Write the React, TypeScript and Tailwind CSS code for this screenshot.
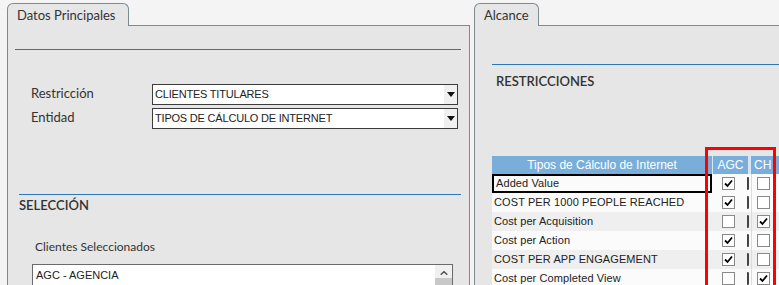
import React from "react";

const rows = [
  { name: "Added Value", agc: true, ch: false, bg: "bg-[#fbfbfb]", sel: true },
  { name: "COST PER 1000 PEOPLE REACHED", agc: true, ch: false, bg: "bg-[#fbfbfb]" },
  { name: "Cost per Acquisition", agc: false, ch: true, bg: "bg-[#efefef]" },
  { name: "Cost per Action", agc: true, ch: false, bg: "bg-[#fbfbfb]" },
  { name: "COST PER APP ENGAGEMENT", agc: true, ch: false, bg: "bg-[#efefef]" },
  { name: "Cost per Completed View", agc: false, ch: true, bg: "bg-[#fbfbfb]" },
];

function Check({ on }: { on: boolean }) {
  return (
    <div className="w-[13px] h-[13px] border border-[#8a8a8a] bg-white flex items-center justify-center">
      {on && (
        <svg width="9" height="9" viewBox="0 0 9 9">
          <path d="M1 4.5 L3.5 7 L8 1.5" stroke="#000" strokeWidth="1.8" fill="none" />
        </svg>
      )}
    </div>
  );
}

function Select({ value }: { value: string }) {
  return (
    <div className="w-[306px] h-[21px] border border-[#3c3c3c] bg-white flex items-stretch">
      <div className="flex-1 pl-[2px] flex items-center text-[11px] text-[#222] font-['Liberation_Sans',sans-serif] tracking-[-0.2px]">
        {value}
      </div>
      <div className="w-[13px] bg-[#f0f0f0] flex items-center justify-center">
        <svg width="8" height="5" viewBox="0 0 8 5">
          <path d="M0 0 H8 L4 5 Z" fill="#111" />
        </svg>
      </div>
    </div>
  );
}

export default function App() {
  const sans = "font-['Lato','Noto_Sans',sans-serif]";
  return (
    <div className={`w-[779px] h-[285px] overflow-hidden bg-[#f4f4f4] flex pt-[3px] ${sans}`}>
      {/* Left panel */}
      <div className="ml-[7px] w-[463px] flex flex-col shrink-0">
        <div className="flex h-[24px]">
          <div className="w-[122px] border border-b-0 border-[#7d8b90] rounded-t-[6px] bg-[#e6e6e6] pl-[9px] pt-[2px] text-[13px] text-[#333]">
            Datos Principales
          </div>
          <div className="flex-1 border-b border-[#7d8b90]" />
        </div>
        <div className="flex-1 border-l border-r border-[#7d8b90] bg-[#e6e6e6] flex flex-col">
          <div className="mt-[23px] ml-[7px] mr-[8px] h-[1px] bg-[#2b78b8]" />
          <div className="mt-[34px] flex flex-col gap-[3px]">
            <div className="flex items-center">
              <div className="w-[144px] pl-[23px] text-[13px] text-[#333]">Restricción</div>
              <Select value="CLIENTES TITULARES" />
            </div>
            <div className="flex items-center">
              <div className="w-[144px] pl-[23px] text-[13px] text-[#333]">Entidad</div>
              <Select value="TIPOS DE CÁLCULO DE INTERNET" />
            </div>
          </div>
          <div className="mt-[65px] ml-[11px] mr-[8px] h-[1px] bg-[#2b78b8]" />
          <div className="ml-[11px] mt-[1px] text-[13px] font-semibold text-[#333]">SELECCIÓN</div>
          <div className="ml-[27px] mt-[23px] text-[12px] text-[#333]">Clientes Seleccionados</div>
          <div className="ml-[24px] mt-[8px] w-[421px] h-[40px] border border-[#6b6b6b] bg-white flex">
            <div className="flex-1 pl-[3px] pt-[2px] text-[11px] text-[#222] font-['Liberation_Sans',sans-serif]">
              AGC - AGENCIA
            </div>
            <div className="w-[17px] bg-[#f0f0f0] flex flex-col items-center">
              <svg className="mt-[6px]" width="8" height="5" viewBox="0 0 8 5">
                <path d="M0 4.5 L4 0.8 L8 4.5" stroke="#555" strokeWidth="1.8" fill="none" />
              </svg>
              <div className="mt-[3px] w-full h-[30px] bg-[#c8c8c8]" />
            </div>
          </div>
        </div>
      </div>

      {/* Right panel */}
      <div className="ml-[4px] flex-1 flex flex-col min-w-0">
        <div className="flex h-[24px]">
          <div className="w-[65px] border border-b-0 border-[#7d8b90] rounded-t-[6px] bg-[#e6e6e6] pl-[9px] pt-[2px] text-[13px] text-[#333]">
            Alcance
          </div>
          <div className="flex-1 border-b border-[#7d8b90]" />
        </div>
        <div className="relative flex-1 border-l border-[#7d8b90] bg-[#e6e6e6] flex flex-col pl-[17px]">
          <div className="mt-[38px] h-[1px] bg-[#2b78b8]" />
          <div className="ml-[4px] mt-[7px] text-[13px] font-semibold text-[#333]">RESTRICCIONES</div>
          <div className="mt-[65px] flex flex-col font-['Liberation_Sans',sans-serif]">
            <div className="flex h-[18px] text-white text-[12px]">
              <div className="w-[220px] bg-[#79aedb] flex items-center justify-center">Tipos de Cálculo de Internet</div>
              <div className="w-[1px] bg-[#d7e6f2]" />
              <div className="w-[35px] bg-[#79aedb] flex items-center justify-center">AGC</div>
              <div className="w-[3px] bg-[#d7e6f2]" />
              <div className="flex-1 bg-[#79aedb] flex items-center pl-[3px]">CH</div>
            </div>
            {rows.map((r) => (
              <div key={r.name} className={`flex h-[19px] ${r.bg}`}>
                <div
                  className={`w-[220px] flex items-center pl-[2px] text-[11px] text-[#222] tracking-[0.1px] ${
                    r.sel ? "border-2 border-black pl-[0px]" : ""
                  }`}
                >
                  {r.name}
                </div>
                <div className="w-[10px]" />
                <div className="flex items-center">
                  <Check on={r.agc} />
                </div>
                <div className="w-[12px] flex items-center">
                  <div className="ml-[12px] w-[3px] h-[13px] border-l-[2px] border-l-[#444] border-t border-b border-t-[#999] border-b-[#999]" />
                </div>
                <div className="w-[1px] ml-[4px] bg-[#dcdcdc]" />
                <div className="ml-[5px] flex items-center">
                  <Check on={r.ch} />
                </div>
              </div>
            ))}
          </div>
          <div className="absolute left-[230px] top-[121px] w-[71px] h-[150px] border-[3px] border-[#ff0000]" />
        </div>
      </div>
    </div>
  );
}
